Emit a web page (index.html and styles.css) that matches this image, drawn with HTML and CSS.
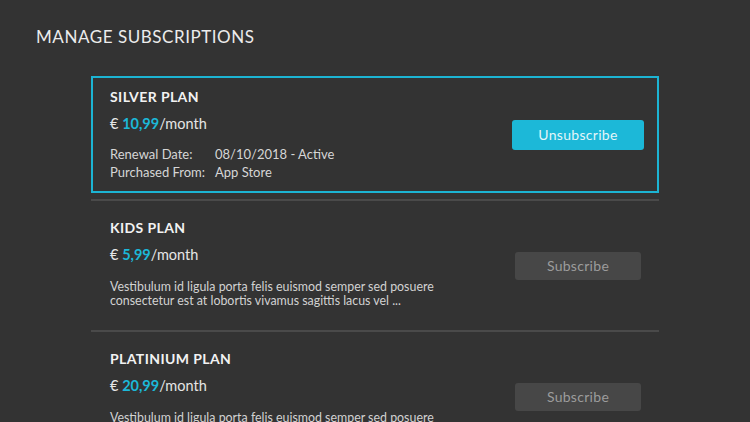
FILE: index.html
```html
<!DOCTYPE html>
<html>
<head>
<meta charset="utf-8">
<link rel="stylesheet" href="styles.css">
</head>
<body>
<h1 class="page-title">MANAGE SUBSCRIPTIONS</h1>
<div class="plans">
  <div class="plan plan--active">
    <div class="plan-info">
      <div class="plan-name">SILVER PLAN</div>
      <div class="plan-price">€ <span class="amount">10,99</span>/month</div>
      <div class="plan-meta">
        <div class="meta-row"><span class="meta-label">Renewal Date:</span><span class="meta-value">08/10/2018 - Active</span></div>
        <div class="meta-row"><span class="meta-label">Purchased From:</span><span class="meta-value">App Store</span></div>
      </div>
    </div>
    <button class="btn btn--primary">Unsubscribe</button>
  </div>
  <div class="divider"></div>
  <div class="plan">
    <div class="plan-info">
      <div class="plan-name">KIDS PLAN</div>
      <div class="plan-price">€ <span class="amount">5,99</span>/month</div>
      <p class="plan-desc">Vestibulum id ligula porta felis euismod semper sed posuere consectetur est at lobortis vivamus sagittis lacus vel ...</p>
    </div>
    <button class="btn btn--secondary">Subscribe</button>
  </div>
  <div class="divider"></div>
  <div class="plan">
    <div class="plan-info">
      <div class="plan-name">PLATINIUM PLAN</div>
      <div class="plan-price">€ <span class="amount">20,99</span>/month</div>
      <p class="plan-desc">Vestibulum id ligula porta felis euismod semper sed posuere consectetur est at lobortis vivamus sagittis lacus vel ...</p>
    </div>
    <button class="btn btn--secondary">Subscribe</button>
  </div>
</div>
</body>
</html>
```

FILE: styles.css
```css
html, body {
  margin: 0;
  padding: 0;
  background: #333333;
  height: 100%;
  overflow: hidden;
}
body {
  font-family: Lato, "Noto Sans", sans-serif;
  color: #e6e6e6;
}
.page-title {
  margin: 0;
  padding: 27px 0 0 36px;
  font-size: 17px;
  line-height: 20px;
  font-weight: 400;
  letter-spacing: 0.55px;
  color: #ececec;
}
.plans {
  margin: 29px 0 0 91px;
  width: 568px;
  display: flex;
  flex-direction: column;
  gap: 6px;
}
.plan {
  box-sizing: border-box;
  height: 117px;
  border: 2px solid transparent;
  padding: 11px 0 0 17px;
  display: flex;
  justify-content: space-between;
  align-items: flex-start;
  overflow: hidden;
}
.plan--active {
  border-color: #1cb4d3;
}
.plan-info {
  display: flex;
  flex-direction: column;
}
.plan-name {
  font-size: 14px;
  line-height: 16px;
  font-weight: 700;
  letter-spacing: 0.4px;
  color: #f2f2f2;
}
.plan-price {
  margin-top: 10px;
  font-size: 14.5px;
  line-height: 18px;
  color: #e6e6e6;
}
.amount {
  color: #1cb8d8;
  font-weight: 700;
}
.plan-meta {
  margin-top: 12px;
  display: flex;
  flex-direction: column;
  font-size: 13px;
  line-height: 18px;
  color: #d6d6d6;
}
.meta-label {
  display: inline-block;
  width: 105px;
}
.plan-desc {
  margin: 16px 0 0;
  width: 340px;
  font-size: 12.4px;
  line-height: 13.5px;
  color: #d2d2d2;
}
.divider {
  height: 2px;
  background: #4a4a4a;
}
.btn {
  align-self: center;
  border: none;
  border-radius: 3px;
  font-family: inherit;
  font-size: 14px;
  letter-spacing: 0.3px;
  margin-top: -11px;
}
.btn--primary {
  width: 132px;
  height: 30px;
  margin-right: 13px;
  background: #1cb8d8;
  color: #e3f5f9;
}
.btn--secondary {
  width: 126px;
  height: 28px;
  margin-right: 16px;
  background: #474747;
  color: #9c9c9c;
}
```
